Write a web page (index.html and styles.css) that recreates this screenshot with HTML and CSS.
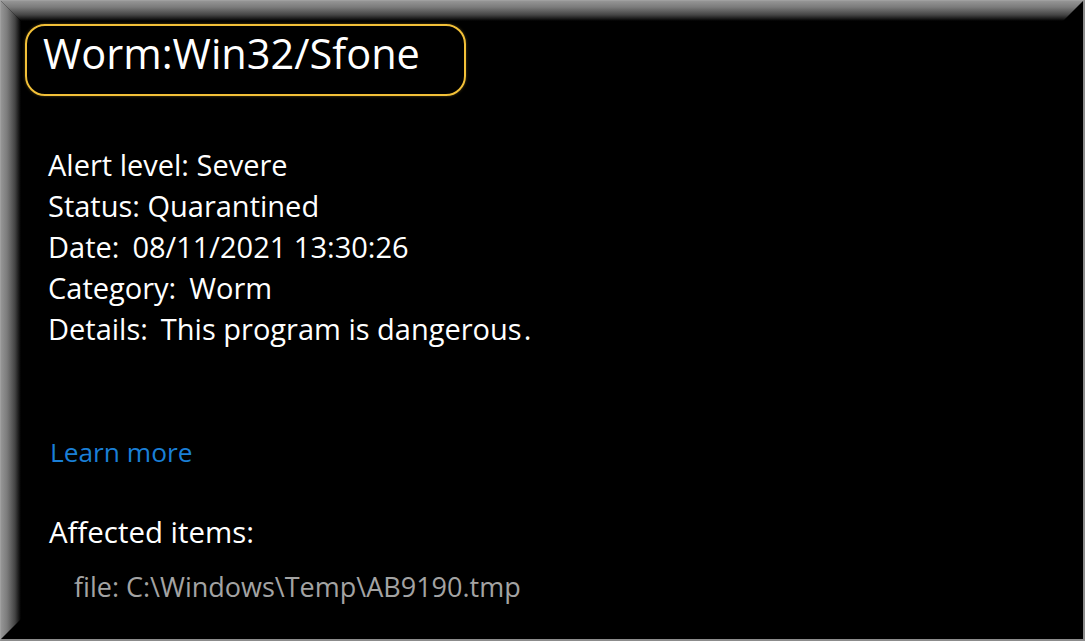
FILE: index.html
```html
<!DOCTYPE html>
<html>
<head>
<meta charset="utf-8">
<link rel="stylesheet" href="styles.css">
</head>
<body>
<div class="frame">
  <div class="bevel-top"></div>
  <div class="bevel-left"></div>
  <div class="content">
    <div class="title-box"><span class="title">Worm:Win32/Sfone</span></div>
    <div class="details">
      <div class="line">Alert level: Severe</div>
      <div class="line">Status: Quarantined</div>
      <div class="line">Date:<span class="gap"></span>08/11/2021 13:30:26</div>
      <div class="line">Category:<span class="gap"></span>Worm</div>
      <div class="line">Details:<span class="gap"></span>This program is dangerous<span class="dot">.</span></div>
    </div>
    <a class="learn" href="#">Learn more</a>
    <div class="affected">Affected items:</div>
    <div class="file">file: C:\Windows\Temp\AB9190.tmp</div>
  </div>
</div>
</body>
</html>
```

FILE: styles.css
```css
* { box-sizing: border-box; }
html, body { margin: 0; padding: 0; background: #000; }
.frame {
  position: relative;
  width: 1085px;
  height: 641px;
  background: #000;
  border-top: 1px solid #a0a0a0;
  border-left: 1px solid #a0a0a0;
  border-right: 2px solid #8c8c8c;
  border-bottom: 2px solid #8c8c8c;
  overflow: hidden;
  font-family: "Open Sans", "Noto Sans", sans-serif;
  color: #fff;
}
.bevel-top {
  position: absolute;
  left: 0; top: 0; right: 0;
  height: 20px;
  background: linear-gradient(to bottom, #959595 0%, #7c7c7c 30%, #444 70%, #000 100%);
  clip-path: polygon(0 0, 100% 0, calc(100% - 20px) 100%, 20px 100%);
}
.bevel-left {
  position: absolute;
  left: 0; top: 0; bottom: 0;
  width: 20px;
  background: linear-gradient(to right, #959595 0%, #7c7c7c 30%, #444 70%, #000 100%);
  clip-path: polygon(0 0, 100% 20px, 100% calc(100% - 20px), 0 100%);
}
.content {
  position: relative;
  display: flex;
  flex-direction: column;
  align-items: flex-start;
  padding: 23px 0 0 24px;
}
.title-box {
  width: 441px;
  height: 72px;
  border: 2px solid #f2c038;
  border-radius: 20px;
  padding-left: 16px;
  display: flex;
  align-items: center;
  box-shadow: 0 0 3px rgba(242, 192, 56, 0.35);
}
.title {
  font-size: 41.5px;
  line-height: 1;
  margin-top: -12px;
}
.details {
  margin-top: 48px;
  padding-left: 23px;
  font-size: 29px;
  line-height: 41px;
}
.gap { display: inline-block; width: 13px; }
.dot { margin-left: 2px; }
.learn {
  margin-top: 83px;
  margin-left: 25px;
  font-size: 26.3px;
  line-height: 41px;
  color: #1a7fd6;
  text-decoration: none;
}
.affected {
  margin-top: 39px;
  margin-left: 24px;
  font-size: 29.4px;
  line-height: 41px;
}
.file {
  margin-top: 13px;
  margin-left: 49px;
  font-size: 27px;
  line-height: 41px;
  color: #a3a3a3;
}
```
